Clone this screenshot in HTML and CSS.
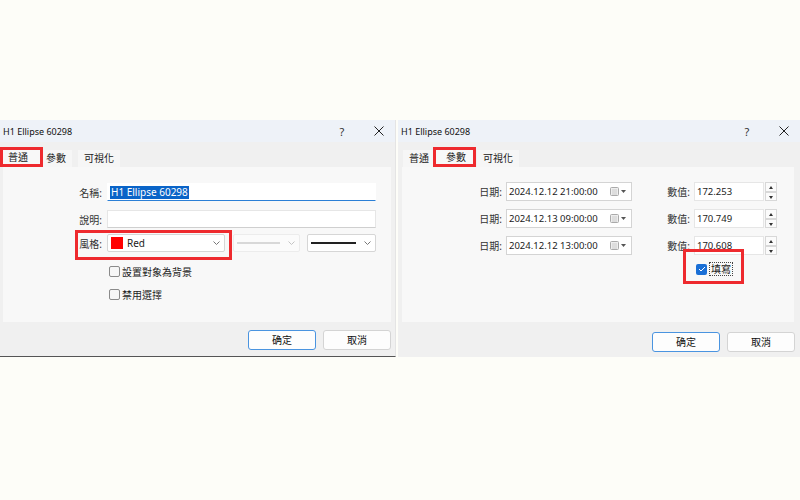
FILE: index.html
```html
<!DOCTYPE html>
<html>
<head>
<meta charset="utf-8">
<link rel="stylesheet" href="styles.css">
</head>
<body>
<div class="screens">
    <!-- 普通 tab -->
    <div class="dialog left">
        <div class="titlebar">
            <span class="title">H1 Ellipse 60298</span>
            <span class="help">?</span>
            <span class="close"><svg width="10" height="10" viewBox="0 0 10 10"><path d="M0.5 0.5L9.5 9.5M9.5 0.5L0.5 9.5" stroke="#222" stroke-width="1"/></svg></span>
        </div>
        <div class="tabs">
            <span class="tab active marked">普通</span>
            <span class="tab">參數</span>
            <span class="tab">可視化</span>
        </div>
        <div class="panel">
            <div class="row r-name">
                <span class="label">名稱:</span>
                <span class="input focused wide"><span class="selected">H1 Ellipse 60298</span></span>
            </div>
            <div class="row r-desc">
                <span class="label">說明:</span>
                <span class="input wide"></span>
            </div>
            <div class="row r-style">
                <span class="mark mark-style"></span>
                <span class="label">風格:</span>
                <span class="select color-select">
                    <span class="swatch"></span>
                    <span class="select-text">Red</span>
                    <svg class="chev" width="7" height="4" viewBox="0 0 7 4"><path d="M0.5 0.5L3.5 3.5L6.5 0.5" fill="none" stroke="#777"/></svg>
                </span>
                <span class="select line-select disabled">
                    <span class="line thin"></span>
                    <svg class="chev" width="7" height="4" viewBox="0 0 7 4"><path d="M0.5 0.5L3.5 3.5L6.5 0.5" fill="none" stroke="#c4c4c4"/></svg>
                </span>
                <span class="select width-select">
                    <span class="line thick"></span>
                    <svg class="chev" width="7" height="4" viewBox="0 0 7 4"><path d="M0.5 0.5L3.5 3.5L6.5 0.5" fill="none" stroke="#777"/></svg>
                </span>
            </div>
            <label class="check first"><span class="box"></span>設置對象為背景</label>
            <label class="check"><span class="box"></span>禁用選擇</label>
        </div>
        <div class="buttons">
            <span class="btn default">确定</span>
            <span class="btn">取消</span>
        </div>
    </div>

    <!-- 參數 tab -->
    <div class="dialog right">
        <div class="titlebar">
            <span class="title">H1 Ellipse 60298</span>
            <span class="help">?</span>
            <span class="close"><svg width="10" height="10" viewBox="0 0 10 10"><path d="M0.5 0.5L9.5 9.5M9.5 0.5L0.5 9.5" stroke="#222" stroke-width="1"/></svg></span>
        </div>
        <div class="tabs">
            <span class="tab">普通</span>
            <span class="tab active marked">參數</span>
            <span class="tab">可視化</span>
        </div>
        <div class="panel">
            <div class="prow">
                <span class="label">日期:</span>
                <span class="date">2024.12.12 21:00:00
                    <svg class="cal" width="16" height="9" viewBox="0 0 16 9"><rect x="0.5" y="0.5" width="8" height="8" rx="1" fill="#eee" stroke="#aaa"/><path d="M2 3H7M2 5H7M2 7H7" stroke="#ccc"/><path d="M11 3H16L13.5 6Z" fill="#555"/></svg>
                </span>
                <span class="label num-label">數值:</span>
                <span class="num">172.253</span>
                <span class="spin"><span class="up"></span><span class="down"></span></span>
            </div>
            <div class="prow">
                <span class="label">日期:</span>
                <span class="date">2024.12.13 09:00:00
                    <svg class="cal" width="16" height="9" viewBox="0 0 16 9"><rect x="0.5" y="0.5" width="8" height="8" rx="1" fill="#eee" stroke="#aaa"/><path d="M2 3H7M2 5H7M2 7H7" stroke="#ccc"/><path d="M11 3H16L13.5 6Z" fill="#555"/></svg>
                </span>
                <span class="label num-label">數值:</span>
                <span class="num">170.749</span>
                <span class="spin"><span class="up"></span><span class="down"></span></span>
            </div>
            <div class="prow">
                <span class="label">日期:</span>
                <span class="date">2024.12.12 13:00:00
                    <svg class="cal" width="16" height="9" viewBox="0 0 16 9"><rect x="0.5" y="0.5" width="8" height="8" rx="1" fill="#eee" stroke="#aaa"/><path d="M2 3H7M2 5H7M2 7H7" stroke="#ccc"/><path d="M11 3H16L13.5 6Z" fill="#555"/></svg>
                </span>
                <span class="label num-label">數值:</span>
                <span class="num">170.608</span>
                <span class="spin"><span class="up"></span><span class="down"></span></span>
            </div>
            <div class="fill-row">
                <span class="mark mark-fill"></span>
                <span class="box checked"><svg width="8" height="6" viewBox="0 0 8 6"><path d="M1 3L3 5L7 1" fill="none" stroke="#fff" stroke-width="1"/></svg></span>
                <span class="focus-text">填寫</span>
            </div>
        </div>
        <div class="buttons">
            <span class="btn default">确定</span>
            <span class="btn">取消</span>
        </div>
    </div>
</div>
</body>
</html>
```

FILE: styles.css
```css
html, body {
    margin: 0;
    padding: 0;
    width: 100%;
    height: 100%;
}
body {
    background: #fdfdf8;
    font-family: "Noto Sans", "Noto Sans CJK TC", sans-serif;
    font-size: 9.5px;
    color: #1b1b1b;
    overflow: hidden;
}
.screens {
    display: flex;
    gap: 2px;
    padding-top: 120px;
}
.dialog {
    display: flex;
    flex-direction: column;
    height: 237px;
    background: #f0f0f0;
    border-right: 1px solid #e4e4e4;
    box-sizing: border-box;
}
.left {
    width: 396px;
    border-bottom: 1px solid #555;
}
.right {
    width: 402px;
    border-right: none;
}

/* title bar */
.titlebar {
    display: flex;
    align-items: center;
    height: 22px;
    background: #eef2f8;
    padding-left: 3px;
}
.title {
    flex: 1;
    font-size: 9px;
    color: #111;
}
.help {
    width: 42px;
    text-align: center;
    font-size: 11px;
    color: #333;
}
.close {
    width: 32px;
    display: flex;
    justify-content: center;
}

/* tabs */
.tabs {
    display: flex;
    align-items: flex-end;
    height: 25px;
    padding-left: 2px;
}
.right .tabs {
    padding-left: 5px;
}
.tab {
    height: 17px;
    line-height: 17px;
    padding: 0 6px;
    margin-right: 6px;
    font-size: 10px;
    background: #f6f6f6;
    color: #222;
}
.tab.active {
    background: #f8f8f8;
}
.tab.marked {
    position: relative;
    z-index: 1;
    outline: 3px solid #ee2a2e;
    outline-offset: -3px;
    height: 20px;
    line-height: 20px;
}
.left .tab.marked {
    margin: 0 -3px 0 -2px;
    padding: 0 15px 0 8px;
}
.right .tab.marked {
    margin: 0 1px 0 -8px;
    padding: 0 10px 0 13px;
}

.panel {
    position: relative;
    height: 155px;
    margin: 0 4px 0 3px;
    background: #f8f8f8;
    box-sizing: border-box;
}
.right .panel {
    margin: 0 6px 0 4px;
}

/* 普通 */
.row {
    position: relative;
    display: flex;
    align-items: center;
    height: 18px;
}
.r-name { margin-top: 16px; }
.r-desc { margin-top: 9px; }
.r-style { margin-top: 6px; }
.label {
    width: 99px;
    margin-right: 5px;
    text-align: right;
    font-size: 10px;
    color: #333;
}
.input {
    height: 18px;
    background: #fff;
    box-sizing: border-box;
    border: 1px solid #e6e6e6;
    border-bottom-color: #cfcfcf;
    display: flex;
    align-items: center;
    padding-left: 2px;
}
.wide { width: 269px; }
.input.focused {
    border-color: #fff;
    border-bottom: 1px solid #2b7fd6;
}
.selected {
    background: #0a64c8;
    color: #fff;
    font-size: 10px;
    line-height: 13px;
    padding: 0 1px;
}
.select {
    position: relative;
    display: flex;
    align-items: center;
    height: 18px;
    box-sizing: border-box;
    background: #fff;
    border: 1px solid #d6d6d6;
    border-radius: 2px;
}
.color-select {
    width: 118px;
    padding-left: 3px;
}
.swatch {
    width: 12px;
    height: 12px;
    background: #ff0000;
    margin-right: 4px;
}
.select-text {
    font-size: 10px;
    flex: 1;
}
.chev {
    margin-right: 4px;
}
.line-select {
    width: 67px;
    margin-left: 8px;
    background: #fbfbfb;
    border-color: #ececec;
    padding-left: 3px;
}
.width-select {
    width: 69px;
    margin-left: 7px;
    padding-left: 3px;
}
.line {
    flex: 1;
    margin-right: 8px;
}
.line.thin { border-top: 2px solid #d8d8d8; }
.line.thick { border-top: 2px solid #222; }
.check {
    display: flex;
    align-items: center;
    margin-left: 106px;
    height: 12px;
    font-size: 10px;
    color: #222;
}
.check.first { margin-top: 13px; }
.check + .check { margin-top: 11px; }
.box {
    width: 9px;
    height: 9px;
    border: 1px solid #8a8a8a;
    border-radius: 2px;
    background: #f6f6f6;
    margin-right: 2px;
}

/* 參數 */
.prow {
    display: flex;
    align-items: center;
    height: 19px;
    margin-top: 8px;
}
.prow:first-child { margin-top: 15px; }
.prow .label { width: 100px; margin-right: 4px; }
.date {
    display: flex;
    align-items: center;
    justify-content: space-between;
    width: 126px;
    height: 19px;
    box-sizing: border-box;
    background: #fff;
    border: 1px solid #d4d4d4;
    padding: 0 5px 0 2px;
    font-size: 9.5px;
}
.num-label {
    width: 58px !important;
}
.num {
    display: flex;
    align-items: center;
    width: 70px;
    height: 19px;
    box-sizing: border-box;
    background: #fff;
    border: 1px solid #e6e6e6;
    padding-left: 2px;
    font-size: 9.5px;
}
.spin {
    display: flex;
    flex-direction: column;
    width: 12px;
    height: 19px;
    margin-left: 1px;
}
.spin span {
    flex: 1;
    background: #fbfbfb;
    border: 1px solid #d8d8d8;
    position: relative;
}
.spin .up::after, .spin .down::after {
    content: "";
    position: absolute;
    left: 3px;
    top: 3px;
    border-left: 2.5px solid transparent;
    border-right: 2.5px solid transparent;
}
.spin .up::after { border-bottom: 3px solid #333; }
.spin .down::after { border-top: 3px solid #333; }
.fill-row {
    position: relative;
    display: flex;
    align-items: center;
    margin: 7px 0 0 294px;
    height: 14px;
}
.box.checked {
    width: 11px;
    height: 11px;
    border: none;
    background: #1a6fd6;
    display: flex;
    align-items: center;
    justify-content: center;
}
.focus-text {
    font-size: 10px;
    border: 1px dotted #444;
    padding: 0 1px;
    line-height: 12px;
}

/* red annotation boxes */
.mark {
    position: absolute;
    border: 3px solid #ee2a2e;
    box-sizing: border-box;
}
.mark-style {
    left: 72px;
    top: -4px;
    width: 157px;
    height: 30px;
}
.mark-fill {
    left: -13px;
    top: -13px;
    width: 61px;
    height: 35px;
}

/* buttons */
.buttons {
    display: flex;
    justify-content: flex-end;
    gap: 7px;
    margin-top: 8px;
    padding-right: 4px;
}
.right .buttons { padding-right: 5px; margin-top: 10px; }
.btn {
    width: 68px;
    height: 20px;
    line-height: 18px;
    box-sizing: border-box;
    text-align: center;
    background: #fdfdfd;
    border: 1px solid #d4d4d4;
    border-radius: 3px;
    font-size: 10px;
    color: #111;
}
.btn.default {
    border-color: #4a94e0;
}
```
